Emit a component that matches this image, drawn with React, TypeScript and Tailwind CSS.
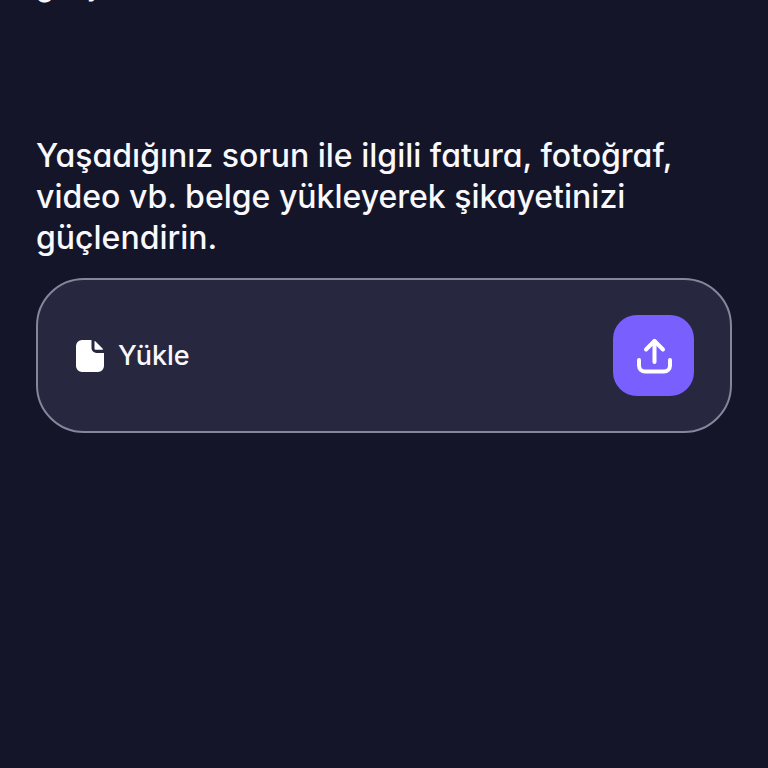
import React from "react";

function FileIcon() {
  return (
    <svg width="28" height="34" viewBox="0 0 28 34" fill="white" aria-hidden="true">
      <path d="M6 1h9.500v8a5 5 0 0 0 5 5H28v13a6 6 0 0 1-6 6H6a6 6 0 0 1-6-6V7a6 6 0 0 1 6-6z" />
      <path d="M18.500 2.500q0-1 .8-.3l7.500 7.600q.8.9-.3.9h-7q-1 0-1-1z" />
    </svg>
  );
}

function UploadIcon() {
  return (
    <svg
      width="36"
      height="38"
      viewBox="0 0 36 38"
      fill="none"
      stroke="white"
      strokeWidth="4"
      strokeLinecap="round"
      strokeLinejoin="round"
      aria-hidden="true"
    >
      <path d="M18.500 25V4" />
      <path d="M10 12.500 18.500 4l8.500 8.500" />
      <path d="M3 23v5.500a6 6 0 0 0 6 6h19a6 6 0 0 0 6-6V23" />
    </svg>
  );
}

export default function App() {
  return (
    <div className="min-h-screen bg-[#141528] px-9 font-['Inter','Open_Sans',sans-serif] font-medium text-[#f8f8fd] [font-feature-settings:'cv11']">
      {/* tail of the line scrolled off the top */}
      <header className="flex h-1 flex-col justify-end overflow-hidden">
        <p className="shrink-0 text-[29px] leading-9">gerç</p>
      </header>

      <main className="pt-[131px]">
        <h1 className="text-[32px] leading-[41px]">
          Yaşadığınız sorun ile ilgili fatura, fotoğraf, video vb. belge yükleyerek şikayetinizi güçlendirin.
        </h1>

        <section className="mt-5 flex items-center justify-between rounded-[48px] border-2 border-[#86859c] bg-[#27283f] px-9 py-[35px]">
          <div className="flex items-center gap-3.5 pl-0.5">
            <FileIcon />
            <span id="upload-label" className="text-[27px] leading-9">
              Yükle
            </span>
          </div>
          <button
            type="button"
            aria-labelledby="upload-label"
            className="flex size-[81px] shrink-0 cursor-pointer items-center justify-center rounded-3xl bg-[#7a5fff]"
          >
            <UploadIcon />
          </button>
        </section>
      </main>
    </div>
  );
}
